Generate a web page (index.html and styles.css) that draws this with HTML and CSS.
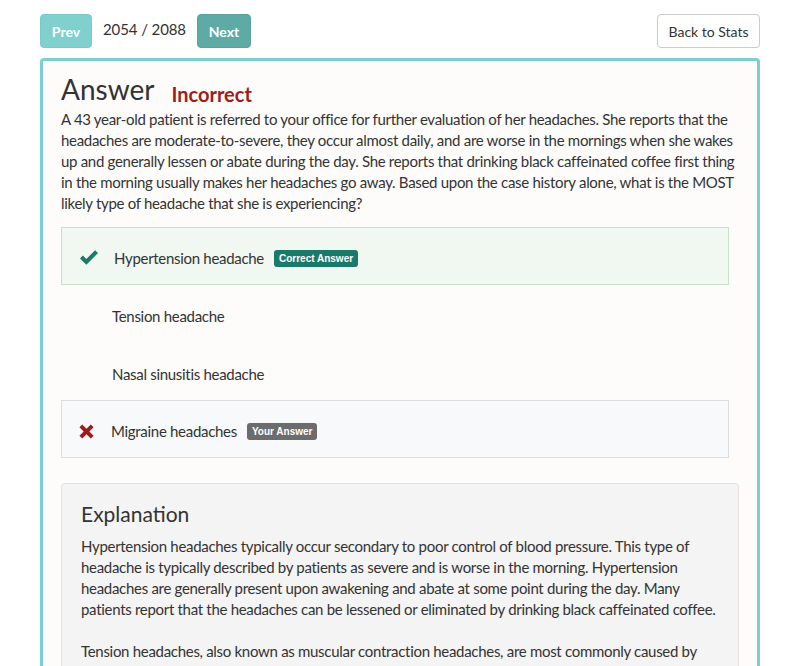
FILE: index.html
```html
<!DOCTYPE html>
<html>
<head>
<meta charset="utf-8">
<link rel="stylesheet" href="styles.css">
</head>
<body>
<div class="page">
  <div class="topbar">
    <div class="nav">
      <button class="btn btn-prev">Prev</button>
      <span class="counter">2054 / 2088</span>
      <button class="btn btn-next">Next</button>
    </div>
    <button class="btn btn-back">Back to Stats</button>
  </div>
  <div class="card">
    <div class="title-row">
      <h1 class="title">Answer</h1>
      <span class="status">Incorrect</span>
    </div>
    <p class="question">A 43 year-old patient is referred to your office for further evaluation of her headaches. She reports that the headaches are moderate-to-severe, they occur almost daily, and are worse in the mornings when she wakes up and generally lessen or abate during the day. She reports that drinking black caffeinated coffee first thing in the morning usually makes her headaches go away. Based upon the case history alone, what is the MOST likely type of headache that she is experiencing?</p>
    <div class="options">
      <div class="option option-correct">
        <svg class="icon icon-check" viewBox="0 0 24 20" width="22" height="18"><path d="M2 10.5 L5.2 7.3 L9 11.1 L18.8 1.3 L22 4.5 L9 17.5 Z" fill="#1a7a6a"/></svg>
        <span class="opt-text">Hypertension headache</span>
        <span class="badge badge-correct">Correct Answer</span>
      </div>
      <div class="option option-plain">
        <span class="opt-text">Tension headache</span>
      </div>
      <div class="option option-plain">
        <span class="opt-text">Nasal sinusitis headache</span>
      </div>
      <div class="option option-wrong">
        <svg class="icon icon-x" viewBox="0 0 18 18" width="17" height="17"><path d="M1.5 4.5 L4.5 1.5 L9 6 L13.5 1.5 L16.5 4.5 L12 9 L16.5 13.5 L13.5 16.5 L9 12 L4.5 16.5 L1.5 13.5 L6 9 Z" fill="#a01c1c"/></svg>
        <span class="opt-text">Migraine headaches</span>
        <span class="badge badge-your">Your Answer</span>
      </div>
    </div>
    <div class="explanation">
      <h2 class="exp-title">Explanation</h2>
      <p class="exp-text">Hypertension headaches typically occur secondary to poor control of blood pressure. This type of headache is typically described by patients as severe and is worse in the morning. Hypertension headaches are generally present upon awakening and abate at some point during the day. Many patients report that the headaches can be lessened or eliminated by drinking black caffeinated coffee.</p>
      <p class="exp-text">Tension headaches, also known as muscular contraction headaches, are most commonly caused by stress, fatigue, and poor posture. They are typically described as a band-like pressure around the head.</p>
    </div>
  </div>
</div>
</body>
</html>
```
FILE: styles.css
```css
html, body {
  margin: 0;
  padding: 0;
  background: #ffffff;
}
body {
  font-family: Lato, "Open Sans", sans-serif;
  color: #333333;
  font-size: 15px;
  overflow: hidden;
}
.page {
  padding: 14px 40px 0 40px;
}
.topbar {
  display: flex;
  justify-content: space-between;
  align-items: center;
  height: 34px;
}
.nav {
  display: flex;
  align-items: center;
}
.btn {
  font-family: Lato, "Open Sans", sans-serif;
  font-size: 14px;
  height: 34px;
  border-radius: 4px;
  padding: 0 8px;
  border: 1px solid transparent;
  box-sizing: border-box;
  cursor: pointer;
  white-space: nowrap;
}
.btn-prev {
  width: 52px;
  background: #80d0cd;
  border-color: #7ccac7;
  color: #ffffff;
  font-weight: bold;
}
.btn-next {
  width: 54px;
  background: #5eaba6;
  border-color: #58a39f;
  color: #ffffff;
  font-weight: bold;
}
.counter {
  font-size: 15px;
  letter-spacing: -0.1px;
  margin: 0 11px 0 11px;
  color: #333;
  position: relative;
  top: -2px;
}
.btn-back {
  width: 103px;
  background: #ffffff;
  border-color: #cccccc;
  color: #333333;
}
.card {
  margin-top: 10px;
  border: 3px solid #7dcfcf;
  border-bottom: none;
  border-radius: 4px 4px 0 0;
  background: #fdfcfb;
  padding: 8px 18px 0 18px;
  height: 620px;
  box-sizing: border-box;
}
.title-row {
  display: flex;
  align-items: baseline;
}
.title {
  font-size: 28px;
  font-weight: normal;
  margin: 0;
  line-height: 40px;
}
.status {
  font-size: 20px;
  font-weight: bold;
  color: #a01c1c;
  margin-left: 17px;
  position: relative;
  top: 2px;
}
.question {
  margin: 0;
  line-height: 21px;
  font-size: 15px;
  letter-spacing: -0.3px;
}
.options {
  margin: 13px 10px 0 0;
}
.option {
  display: flex;
  align-items: center;
  height: 58px;
  box-sizing: border-box;
  padding-left: 16px;
  padding-top: 4px;
  letter-spacing: -0.3px;
}
.option-correct {
  background: #f1f8f1;
  border: 1px solid #c9e2c9;
}
.option-wrong {
  background: #f8f9fa;
  border: 1px solid #dddddd;
  margin-top: -1px;
}
.option-plain {
  padding-left: 51px;
}
.icon {
  display: block;
  margin-right: 14px;
}
.icon-x {
  margin-right: 16px;
}
.opt-text {
  font-size: 15px;
}
.badge {
  font-family: "Liberation Sans", Arial, sans-serif;
  font-size: 10px;
  letter-spacing: 0;
  font-weight: bold;
  color: #ffffff;
  border-radius: 3px;
  padding: 3px 5px;
  margin-left: 10px;
}
.badge-correct {
  background: #1a7a6a;
}
.badge-your {
  background: #6c6c6c;
}
.explanation {
  margin-top: 25px;
  background: #f4f4f4;
  border: 1px solid #e2e2e2;
  border-radius: 4px;
  padding: 15px 19px 20px 19px;
}
.exp-title {
  font-size: 21px;
  font-weight: normal;
  margin: 0 0 7px 0;
  line-height: 30px;
}
.exp-text {
  margin: 0 0 21px 0;
  line-height: 21px;
  font-size: 15px;
  letter-spacing: -0.3px;
}
```
